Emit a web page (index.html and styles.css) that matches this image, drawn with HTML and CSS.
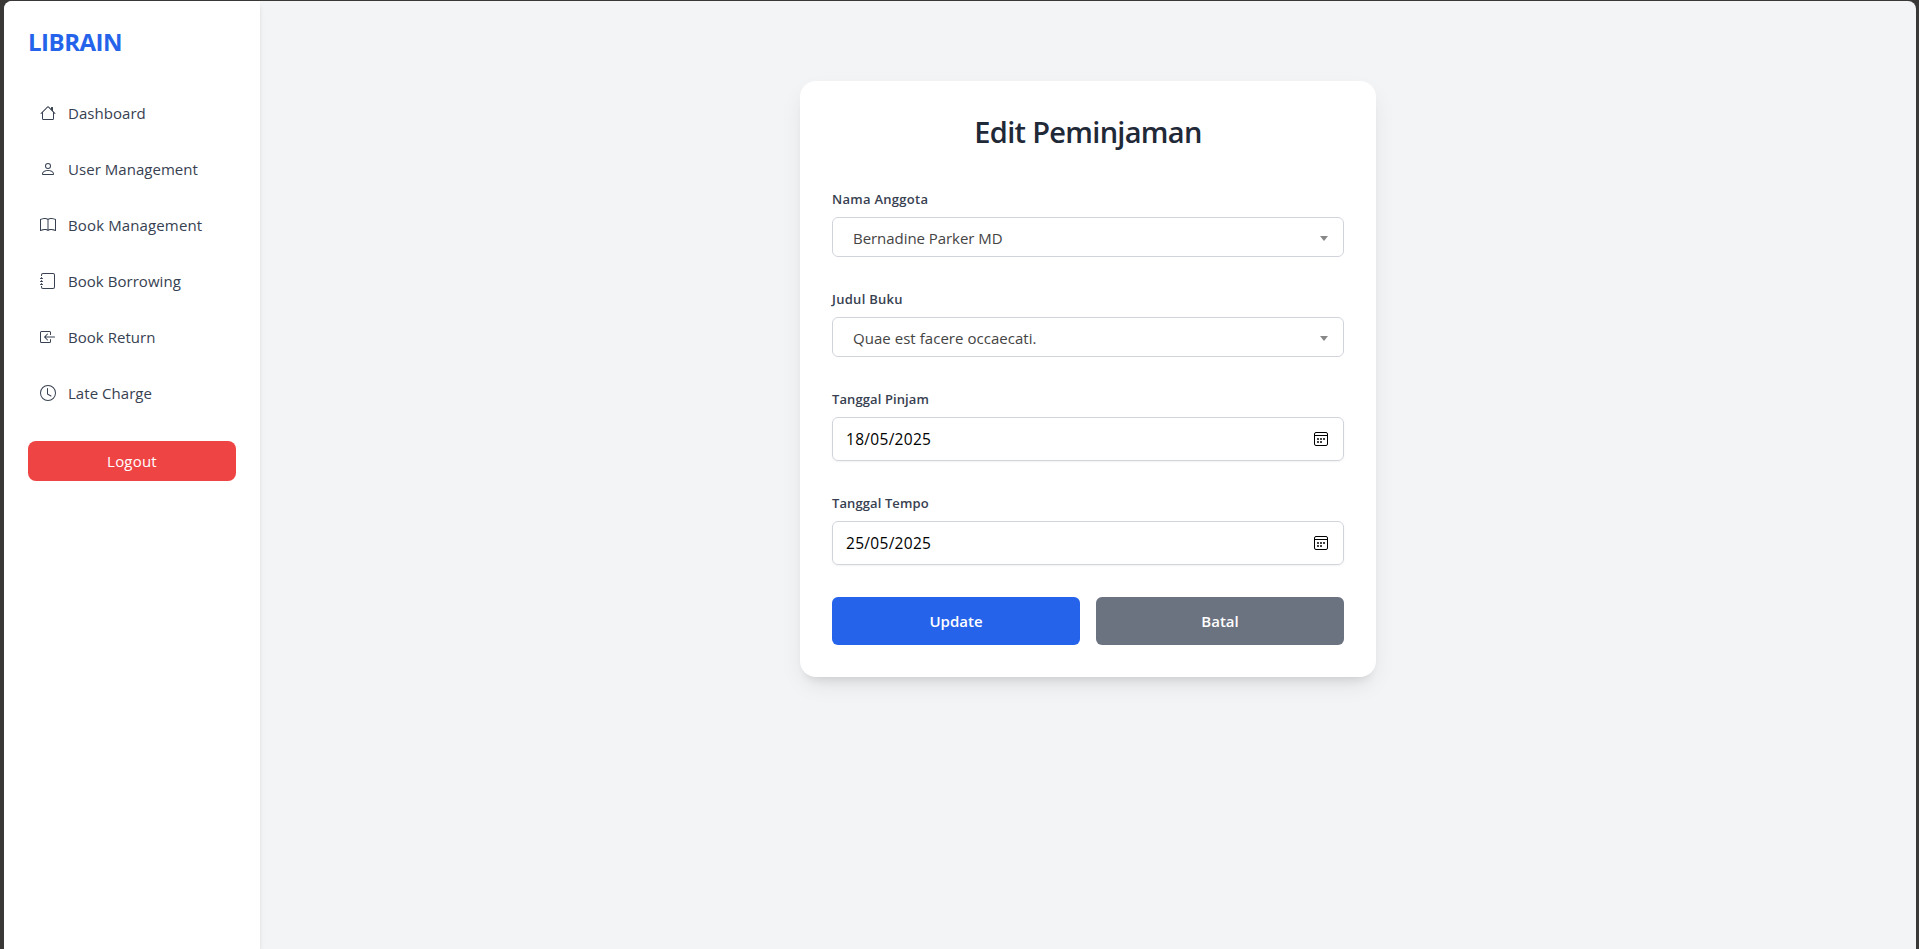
FILE: index.html
```
<!DOCTYPE html>
<html lang="id">
<head>
<meta charset="utf-8">
<title>Edit Peminjaman</title>
<link rel="stylesheet" href="styles.css">
</head>
<body>
<div class="window">
  <aside class="sidebar">
    <div class="brand">LIBRAIN</div>
    <nav class="nav">
      <a class="nav-item"><svg class="icon" viewBox="0 0 16 16"><path d="M8.707 1.5a1 1 0 0 0-1.414 0L.646 8.146a.5.5 0 0 0 .708.708L2 8.207V13.5A1.5 1.5 0 0 0 3.5 15h9a1.5 1.5 0 0 0 1.5-1.5V8.207l.646.647a.5.5 0 0 0 .708-.708L13 5.793V2.5a.5.5 0 0 0-.5-.5h-1a.5.5 0 0 0-.5.5v1.293zM13 7.207V13.5a.5.5 0 0 1-.5.5h-9a.5.5 0 0 1-.5-.5V7.207l5-5z"/></svg><span>Dashboard</span></a>
      <a class="nav-item"><svg class="icon" viewBox="0 0 16 16"><path d="M8 8a3 3 0 1 0 0-6 3 3 0 0 0 0 6m2-3a2 2 0 1 1-4 0 2 2 0 0 1 4 0m4 8c0 1-1 1-1 1H3s-1 0-1-1 1-4 6-4 6 3 6 4m-1-.004c-.001-.246-.154-.986-.832-1.664C11.516 10.68 10.289 10 8 10s-3.516.68-4.168 1.332c-.678.678-.83 1.418-.832 1.664z"/></svg><span>User Management</span></a>
      <a class="nav-item"><svg class="icon" viewBox="0 0 16 16"><path d="M1 2.828c.885-.37 2.154-.769 3.388-.893 1.33-.134 2.458.063 3.112.752v9.746c-.935-.53-2.12-.603-3.213-.493-1.18.12-2.37.461-3.287.811zm7.5-.141c.654-.689 1.782-.886 3.112-.752 1.234.124 2.503.523 3.388.893v9.923c-.918-.35-2.107-.692-3.287-.81-1.094-.111-2.278-.039-3.213.492zM8 1.783C7.015.936 5.587.81 4.287.94c-1.514.153-3.042.672-3.994 1.105A.5.5 0 0 0 0 2.5v11a.5.5 0 0 0 .707.455c.882-.4 2.303-.881 3.68-1.02 1.409-.142 2.59.087 3.223.877a.5.5 0 0 0 .78 0c.633-.79 1.814-1.019 3.222-.877 1.378.139 2.8.62 3.681 1.02A.5.5 0 0 0 16 13.5v-11a.5.5 0 0 0-.293-.455c-.952-.433-2.48-.952-3.994-1.105C10.413.809 8.985.936 8 1.783"/></svg><span class="books">Book Management</span></a>
      <a class="nav-item"><svg class="icon" viewBox="0 0 16 16"><path d="M3 0h10a2 2 0 0 1 2 2v12a2 2 0 0 1-2 2H3a2 2 0 0 1-2-2v-1h1v1a1 1 0 0 0 1 1h10a1 1 0 0 0 1-1V2a1 1 0 0 0-1-1H3a1 1 0 0 0-1 1v1H1V2a2 2 0 0 1 2-2"/><path d="M1 5v-.5a.5.5 0 0 1 1 0V5h.5a.5.5 0 0 1 0 1h-2a.5.5 0 0 1 0-1zm0 3v-.5a.5.5 0 0 1 1 0V8h.5a.5.5 0 0 1 0 1h-2a.5.5 0 0 1 0-1zm0 3v-.5a.5.5 0 0 1 1 0v.5h.5a.5.5 0 0 1 0 1h-2a.5.5 0 0 1 0-1z"/></svg><span>Book Borrowing</span></a>
      <a class="nav-item"><svg class="icon" viewBox="0 0 16 16"><path d="M10 3.5a.5.5 0 0 0-.5-.5h-8a.5.5 0 0 0-.5.5v9a.5.5 0 0 0 .5.5h8a.5.5 0 0 0 .5-.5v-2a.5.5 0 0 1 1 0v2A1.5 1.5 0 0 1 9.5 14h-8A1.5 1.5 0 0 1 0 12.5v-9A1.5 1.5 0 0 1 1.5 2h8A1.5 1.5 0 0 1 11 3.5v2a.5.5 0 0 1-1 0z"/><path d="M4.146 8.354a.5.5 0 0 1 0-.708l3-3a.5.5 0 1 1 .708.708L5.707 7.5H14.5a.5.5 0 0 1 0 1H5.707l2.147 2.146a.5.5 0 0 1-.708.708z"/></svg><span>Book Return</span></a>
      <a class="nav-item"><svg class="icon" viewBox="0 0 16 16"><path d="M8 3.5a.5.5 0 0 0-1 0V9a.5.5 0 0 0 .252.434l3.5 2a.5.5 0 0 0 .496-.868L8 8.71z"/><path d="M8 16A8 8 0 1 0 8 0a8 8 0 0 0 0 16m7-8A7 7 0 1 1 1 8a7 7 0 0 1 14 0"/></svg><span>Late Charge</span></a>
    </nav>
    <button class="logout">Logout</button>
  </aside>
  <main class="main">
    <form class="card">
      <h1 class="title">Edit Peminjaman</h1>
      <div class="field">
        <label class="label wide">Nama Anggota</label>
        <div class="control select"><span class="member">Bernadine Parker MD</span><i class="caret"></i></div>
      </div>
      <div class="field">
        <label class="label wide">Judul Buku</label>
        <div class="control select"><span class="book">Quae est facere occaecati.</span><i class="caret"></i></div>
      </div>
      <div class="field">
        <label class="label">Tanggal Pinjam</label>
        <div class="control date"><span>18/05/2025</span><svg class="cal" viewBox="0 0 14 14"><rect x=".5" y=".5" width="13" height="13" rx="1.5"/><path d="M1 3.5h12"/><path class="dots" d="M3 6h2v2H3zM6 6h2v2H6zM9 6h2v2H9zM3 9h2v2H3zM6 9h2v2H6z"/></svg></div>
      </div>
      <div class="field">
        <label class="label">Tanggal Tempo</label>
        <div class="control date"><span>25/05/2025</span><svg class="cal" viewBox="0 0 14 14"><rect x=".5" y=".5" width="13" height="13" rx="1.5"/><path d="M1 3.5h12"/><path class="dots" d="M3 6h2v2H3zM6 6h2v2H6zM9 6h2v2H9zM3 9h2v2H3zM6 9h2v2H6z"/></svg></div>
      </div>
      <div class="actions">
        <button type="button" class="btn update">Update</button>
        <button type="button" class="btn cancel">Batal</button>
      </div>
    </form>
  </main>
</div>
</body>
</html>
```
FILE: styles.css
```
* { box-sizing: border-box; }
body {
  margin: 0;
  height: 100vh;
  padding: 1px 3px 0 4px;
  overflow: hidden;
  background: #3a3836;
  font-family: "Open Sans", "Noto Sans", sans-serif;
  font-size: 15px;
  line-height: 24px;
}
button { border: 0; font-family: inherit; color: #fff; }
.window {
  display: flex;
  height: 100%;
  overflow: hidden;
  border-radius: 8px 8px 0 0;
  background: #f3f4f6;
}
.sidebar {
  width: 256px;
  padding: 24px;
  background: #fff;
  box-shadow: 0 4px 6px -1px rgba(0, 0, 0, .1), 0 2px 4px -2px rgba(0, 0, 0, .1);
}
.brand {
  height: 32px;
  margin-bottom: 36px;
  color: #2563eb;
  font-size: 24px;
  font-weight: 700;
  line-height: 34px;
  letter-spacing: -.5px;
}
.nav { display: flex; flex-direction: column; gap: 16px; }
.nav-item {
  display: flex;
  align-items: center;
  gap: 12px;
  height: 40px;
  padding: 0 12px;
  color: #374151;
  white-space: nowrap;
  letter-spacing: .04px;
}
.books { letter-spacing: .13px; }
.icon { width: 16px; height: 16px; fill: currentColor; }
.logout {
  display: block;
  width: 100%;
  height: 40px;
  margin-top: 28px;
  border-radius: 8px;
  background: #ef4444;
  font-size: 15px;
  font-weight: 500;
  letter-spacing: .2px;
}
.main { flex: 1; display: flex; justify-content: center; align-items: flex-start; padding-top: 80px; }
.card {
  width: 576px;
  padding: 32px;
  border-radius: 16px;
  background: #fff;
  box-shadow: 0 10px 25px -5px rgba(0, 0, 0, .1), 0 8px 10px -6px rgba(0, 0, 0, .1);
}
.title {
  height: 36px;
  margin: 0 0 40px;
  color: #1f2937;
  font-size: 29px;
  font-weight: 600;
  line-height: 38px;
  letter-spacing: -.7px;
  text-align: center;
}
.field { margin-bottom: 32px; }
.label {
  display: block;
  height: 28px;
  color: #374151;
  font-size: 13px;
  font-weight: 600;
  line-height: 20px;
  letter-spacing: .1px;
}
.wide { letter-spacing: .28px; }
.control {
  display: flex;
  align-items: center;
  justify-content: space-between;
  border: 1px solid #d1d5db;
  border-radius: 6px;
  white-space: nowrap;
}
.select { height: 40px; padding: 2px 15px 0 20px; color: #444; }
.member { letter-spacing: -.05px; }
.book { letter-spacing: .04px; }
.caret {
  border: 4px solid transparent;
  border-top: 5px solid #888;
  border-bottom: 0;
}
.date { height: 44px; padding: 0 15px 0 13px; color: #000; box-shadow: 0 1px 2px rgba(0, 0, 0, .05); }
.date span { font-size: 15.5px; letter-spacing: .3px; }
.cal { width: 14px; height: 14px; fill: none; stroke: #000; }
.cal .dots { fill: #444; stroke: none; }
.actions { display: grid; grid-template-columns: 1fr 1fr; gap: 16px; }
.btn { height: 48px; border-radius: 6px; font-size: 15px; font-weight: 600; }
.update { background: #2563eb; }
.cancel { background: #6b7280; }
```
